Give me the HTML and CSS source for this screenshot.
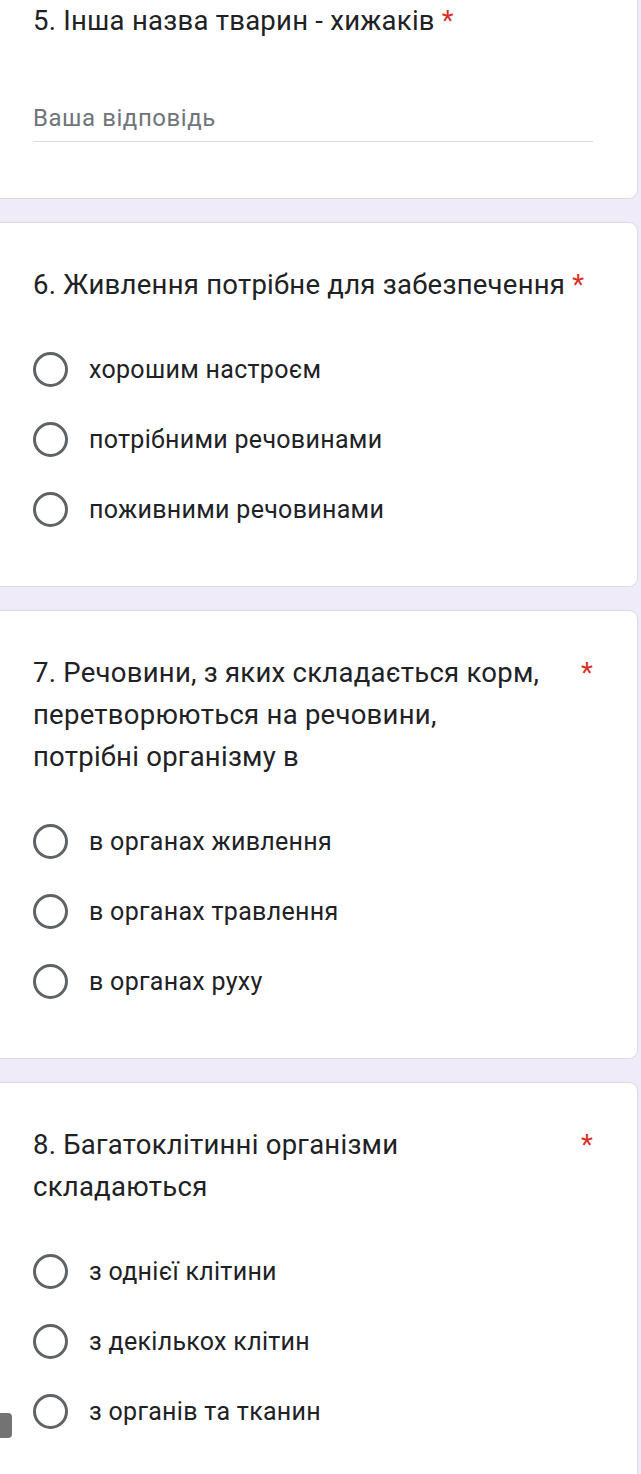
FILE: index.html
```html
<!DOCTYPE html>
<html lang="uk">
<head>
<meta charset="utf-8">
<title>Форма</title>
<link rel="stylesheet" href="styles.css">
</head>
<body>
<main class="form">
  <section class="card card-first">
    <div class="title"><span class="title-text">5. Інша назва тварин - хижаків</span><span class="req">*</span></div>
    <div class="text-input"><span class="placeholder">Ваша відповідь</span></div>
  </section>

  <section class="card">
    <div class="title"><span class="title-text">6. Живлення потрібне для забезпечення</span><span class="req">*</span></div>
    <ul class="options">
      <li class="option"><span class="radio"></span><span class="label">хорошим настроєм</span></li>
      <li class="option"><span class="radio"></span><span class="label">потрібними речовинами</span></li>
      <li class="option"><span class="radio"></span><span class="label">поживними речовинами</span></li>
    </ul>
  </section>

  <section class="card">
    <div class="title title-long"><span class="title-text">7. Речовини, з яких складається корм, перетворюються на речовини, потрібні організму в</span><span class="req">*</span></div>
    <ul class="options">
      <li class="option"><span class="radio"></span><span class="label">в органах живлення</span></li>
      <li class="option"><span class="radio"></span><span class="label">в органах травлення</span></li>
      <li class="option"><span class="radio"></span><span class="label">в органах руху</span></li>
    </ul>
  </section>

  <section class="card card-last">
    <div class="title title-long"><span class="title-text">8. Багатоклітинні організми складаються</span><span class="req">*</span></div>
    <ul class="options">
      <li class="option"><span class="radio"></span><span class="label">з однієї клітини</span></li>
      <li class="option"><span class="radio"></span><span class="label">з декількох клітин</span></li>
      <li class="option"><span class="radio"></span><span class="label">з органів та тканин</span></li>
    </ul>
    <span class="side-tab"></span>
  </section>
</main>
</body>
</html>
```

FILE: styles.css
```css
html, body {
  margin: 0;
  padding: 0;
}

body {
  background: #efebf8;
  font-family: Roboto, "Noto Sans", "Liberation Sans", sans-serif;
  color: #202124;
  height: 1474px;
  overflow: hidden;
}

.form {
  display: flex;
  flex-direction: column;
  gap: 23px;
  padding-right: 3px;
}

.card {
  position: relative;
  background: #ffffff;
  border: 1px solid #dadce0;
  border-left: none;
  border-radius: 0 9px 9px 0;
  padding: 41px 44px 42px 33px;
}

.card-first {
  border-top: none;
  border-radius: 0 0 9px 0;
  padding-top: 0;
  padding-bottom: 56px;
}

.card-last {
  border-bottom: none;
  border-radius: 0 9px 0 0;
  padding-bottom: 30px;
}

.title {
  display: flex;
  align-items: flex-start;
  font-size: 27.5px;
  line-height: 42px;
  letter-spacing: 0.25px;
}

.title-text {
  flex: 0 1 auto;
  min-width: 0;
}

.title-long {
  justify-content: space-between;
}

.title-long .title-text {
  max-width: 510px;
}

.req {
  flex: none;
  color: #d93025;
  padding-left: 7px;
}

.text-input {
  margin-top: 61px;
  height: 39px;
  padding-bottom: 8px;
  box-sizing: border-box;
  border-bottom: 1px solid #dadce0;
  display: flex;
  align-items: center;
}

.placeholder {
  font-size: 24px;
  color: #70757a;
  letter-spacing: 0.55px;
}

.options {
  list-style: none;
  margin: 28px 0 0 0;
  padding: 0;
}

.option {
  display: flex;
  align-items: center;
  height: 70px;
}

.radio {
  box-sizing: border-box;
  width: 35px;
  height: 35px;
  border: 3px solid #5f6368;
  border-radius: 50%;
  flex: none;
}

.label {
  margin-left: 21px;
  font-size: 25px;
  letter-spacing: 0.3px;
  color: #202124;
}

.side-tab {
  position: absolute;
  left: 0;
  top: 330px;
  width: 12px;
  height: 25px;
  background: #737373;
  border-radius: 0 4px 4px 0;
}
```
